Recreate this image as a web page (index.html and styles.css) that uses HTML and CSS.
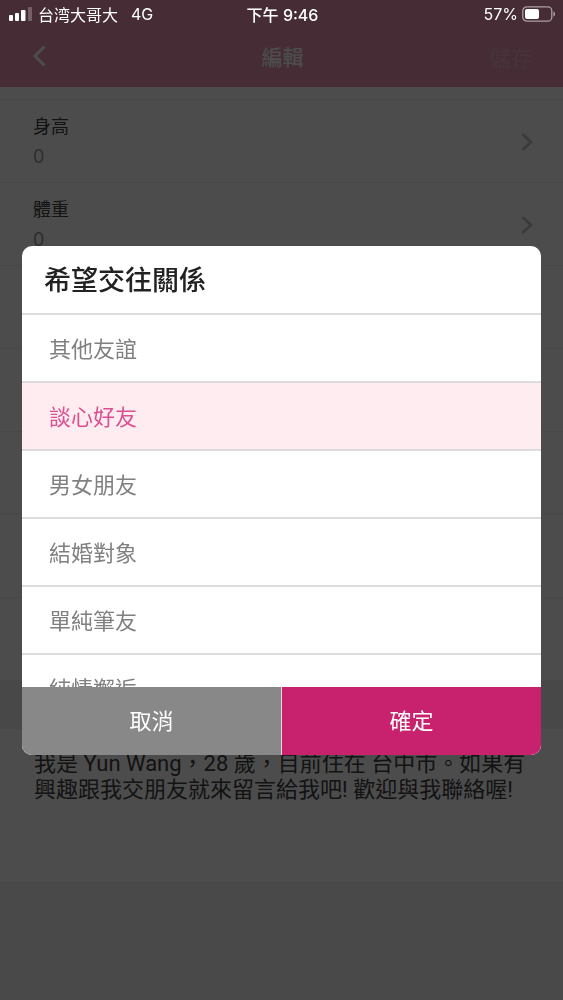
FILE: index.html
```html
<!DOCTYPE html>
<html lang="zh-Hant">
<head>
<meta charset="utf-8">
<meta name="viewport" content="width=device-width, initial-scale=1">
<title>編輯</title>
<link rel="stylesheet" href="styles.css">
</head>
<body>
<div class="app">
  <header class="navbar">
    <button class="nav-back" type="button" aria-label="返回">
      <svg width="14" height="22" viewBox="0 0 14 22"><path d="M12.500 1.500 3 11 12.500 20.500" fill="none" stroke="currentColor" stroke-width="3"/></svg>
    </button>
    <h1 class="nav-title">編輯</h1>
    <button class="nav-save" type="button">儲存</button>
  </header>
  <main class="content">
    <ul class="fields">
      <li class="field">
        <div><div class="field-label">身高</div><div class="field-value">0</div></div>
        <svg class="chevron" width="12" height="18" viewBox="0 0 12 18"><path d="M1.500 1 10 9 1.500 17" fill="none" stroke="currentColor" stroke-width="2.800"/></svg>
      </li>
      <li class="field">
        <div><div class="field-label">體重</div><div class="field-value">0</div></div>
        <svg class="chevron" width="12" height="18" viewBox="0 0 12 18"><path d="M1.500 1 10 9 1.500 17" fill="none" stroke="currentColor" stroke-width="2.800"/></svg>
      </li>
      <li class="field"></li>
      <li class="field"></li>
      <li class="field"></li>
      <li class="field"></li>
      <li class="field"></li>
    </ul>
    <div class="section-gap"></div>
    <p class="about">我是 Yun Wang，28 歲，目前住在 台中市。如果有興趣跟我交朋友就來留言給我吧! 歡迎與我聯絡喔!</p>
  </main>
</div>

<div class="overlay">
  <form class="dialog" role="dialog" aria-modal="true" aria-labelledby="dialog-title">
    <h2 class="dialog-title" id="dialog-title">希望交往關係</h2>
    <div class="options">
      <label class="option"><input type="radio" name="relation">其他友誼</label>
      <label class="option"><input type="radio" name="relation" checked>談心好友</label>
      <label class="option"><input type="radio" name="relation">男女朋友</label>
      <label class="option"><input type="radio" name="relation">結婚對象</label>
      <label class="option"><input type="radio" name="relation">單純筆友</label>
      <label class="option"><input type="radio" name="relation">純情邂逅</label>
    </div>
    <div class="actions">
      <button class="action cancel" type="button">取消</button>
      <button class="action confirm" type="button">確定</button>
    </div>
  </form>
</div>

<div class="statusbar">
  <div class="status-left">
    <svg width="24" height="14" viewBox="0 0 24 14" fill="#fff"><rect x="0" y="8" width="4" height="6" rx="1"/><rect x="6" y="6" width="4" height="8" rx="1"/><rect x="12" y="3" width="4.500" height="11" rx="1"/><rect x="19" y="0" width="4" height="14" rx="1" opacity=".25"/></svg>
    <span>台湾大哥大</span>
    <span class="network">4G</span>
  </div>
  <div class="clock">下午 9:46</div>
  <div class="status-right">
    <span>57%</span>
    <svg width="34" height="16" viewBox="0 0 34 16"><rect x=".8" y=".8" width="29" height="14.400" rx="4" fill="none" stroke="#fff" stroke-opacity=".55" stroke-width="1.300"/><rect x="3" y="3" width="14" height="10" rx="2" fill="#fff"/><path d="M31.500 5.500c2 .8 2 4.200 0 5z" fill="#fff" opacity=".6"/></svg>
  </div>
</div>
</body>
</html>
```
FILE: styles.css
```css
* {
  box-sizing: border-box;
}

body {
  margin: 0;
  background: #f4f4f4;
  color: #404040;
  font-family: Inter, "Noto Sans CJK TC", sans-serif;
  font-size: 22px;
}

h1,
h2,
p,
ul {
  margin: 0;
  padding: 0;
}

button {
  border: 0;
  padding: 0;
  background: none;
  color: inherit;
  font: inherit;
}

.app {
  display: flex;
  flex-direction: column;
  min-height: 100vh;
}

.navbar {
  display: grid;
  grid-template-columns: 1fr auto 1fr;
  align-items: center;
  padding: 28px 30px 3px 32px;
  height: 87px;
  background: #e693b1;
  color: #fff;
}

.nav-back {
  justify-self: start;
  display: flex;
}

.nav-title {
  font-size: 21px;
  font-weight: 500;
}

.nav-save {
  justify-self: end;
  opacity: 0.25;
}

.content {
  padding-top: 12px;
  background: #fff;
}

.fields {
  list-style: none;
  border-top: 1px solid #f2f2f2;
}

.field {
  display: flex;
  align-items: center;
  justify-content: space-between;
  height: 83px;
  padding: 1px 30px 0 33px;
  border-bottom: 1px solid #f2f2f2;
}

.field-label {
  font-size: 18px;
  line-height: 30px;
}

.field-value {
  font-size: 18px;
  line-height: 30px;
  color: #999;
}

.chevron {
  color: #c4c4c4;
}

.section-gap {
  height: 48px;
  background: #f2f2f2;
}

.about {
  min-height: 152px;
  padding: 22px 30px 22px 34px;
  font-family: Roboto, "Noto Sans CJK TC", sans-serif;
  line-height: 26px;
}

.overlay {
  position: fixed;
  inset: 0;
  display: flex;
  align-items: center;
  padding: 0 22px;
  background: rgba(0, 0, 0, 0.7);
}

.dialog {
  flex: 1;
  border-radius: 10px;
  overflow: hidden;
  background: #fff;
}

.dialog-title {
  padding: 2px 22px 0;
  border-bottom: 2px solid #dcdcdc;
  color: #222;
  font-size: 27px;
  font-weight: 500;
  line-height: 65px;
}

.options {
  height: 372px;
  overflow: hidden;
}

.option {
  display: block;
  padding: 2px 27px 0;
  border-bottom: 2px solid #dcdcdc;
  color: #808080;
  line-height: 64px;
}

.option input {
  position: absolute;
  opacity: 0;
}

.option:has(input:checked) {
  background: #ffecf0;
  color: #da5090;
}

.actions {
  display: grid;
  grid-template-columns: 1fr 1fr;
  gap: 1px;
  background: #dcdcdc;
}

.action {
  height: 68px;
  padding-bottom: 4px;
  color: #fff;
}

.cancel {
  background: #888;
}

.confirm {
  background: #c8216e;
}

.statusbar {
  position: fixed;
  inset: 0 0 auto;
  display: grid;
  grid-template-columns: 1fr auto 1fr;
  align-items: center;
  height: 28px;
  padding: 0 7px 0 9px;
  color: #fff;
  font-size: 16px;
}

.status-left,
.status-right {
  display: flex;
  align-items: center;
  gap: 5px;
}

.status-right {
  justify-self: end;
  gap: 4px;
}

.network {
  margin-left: 8px;
}

.clock {
  font-weight: 500;
}
```
